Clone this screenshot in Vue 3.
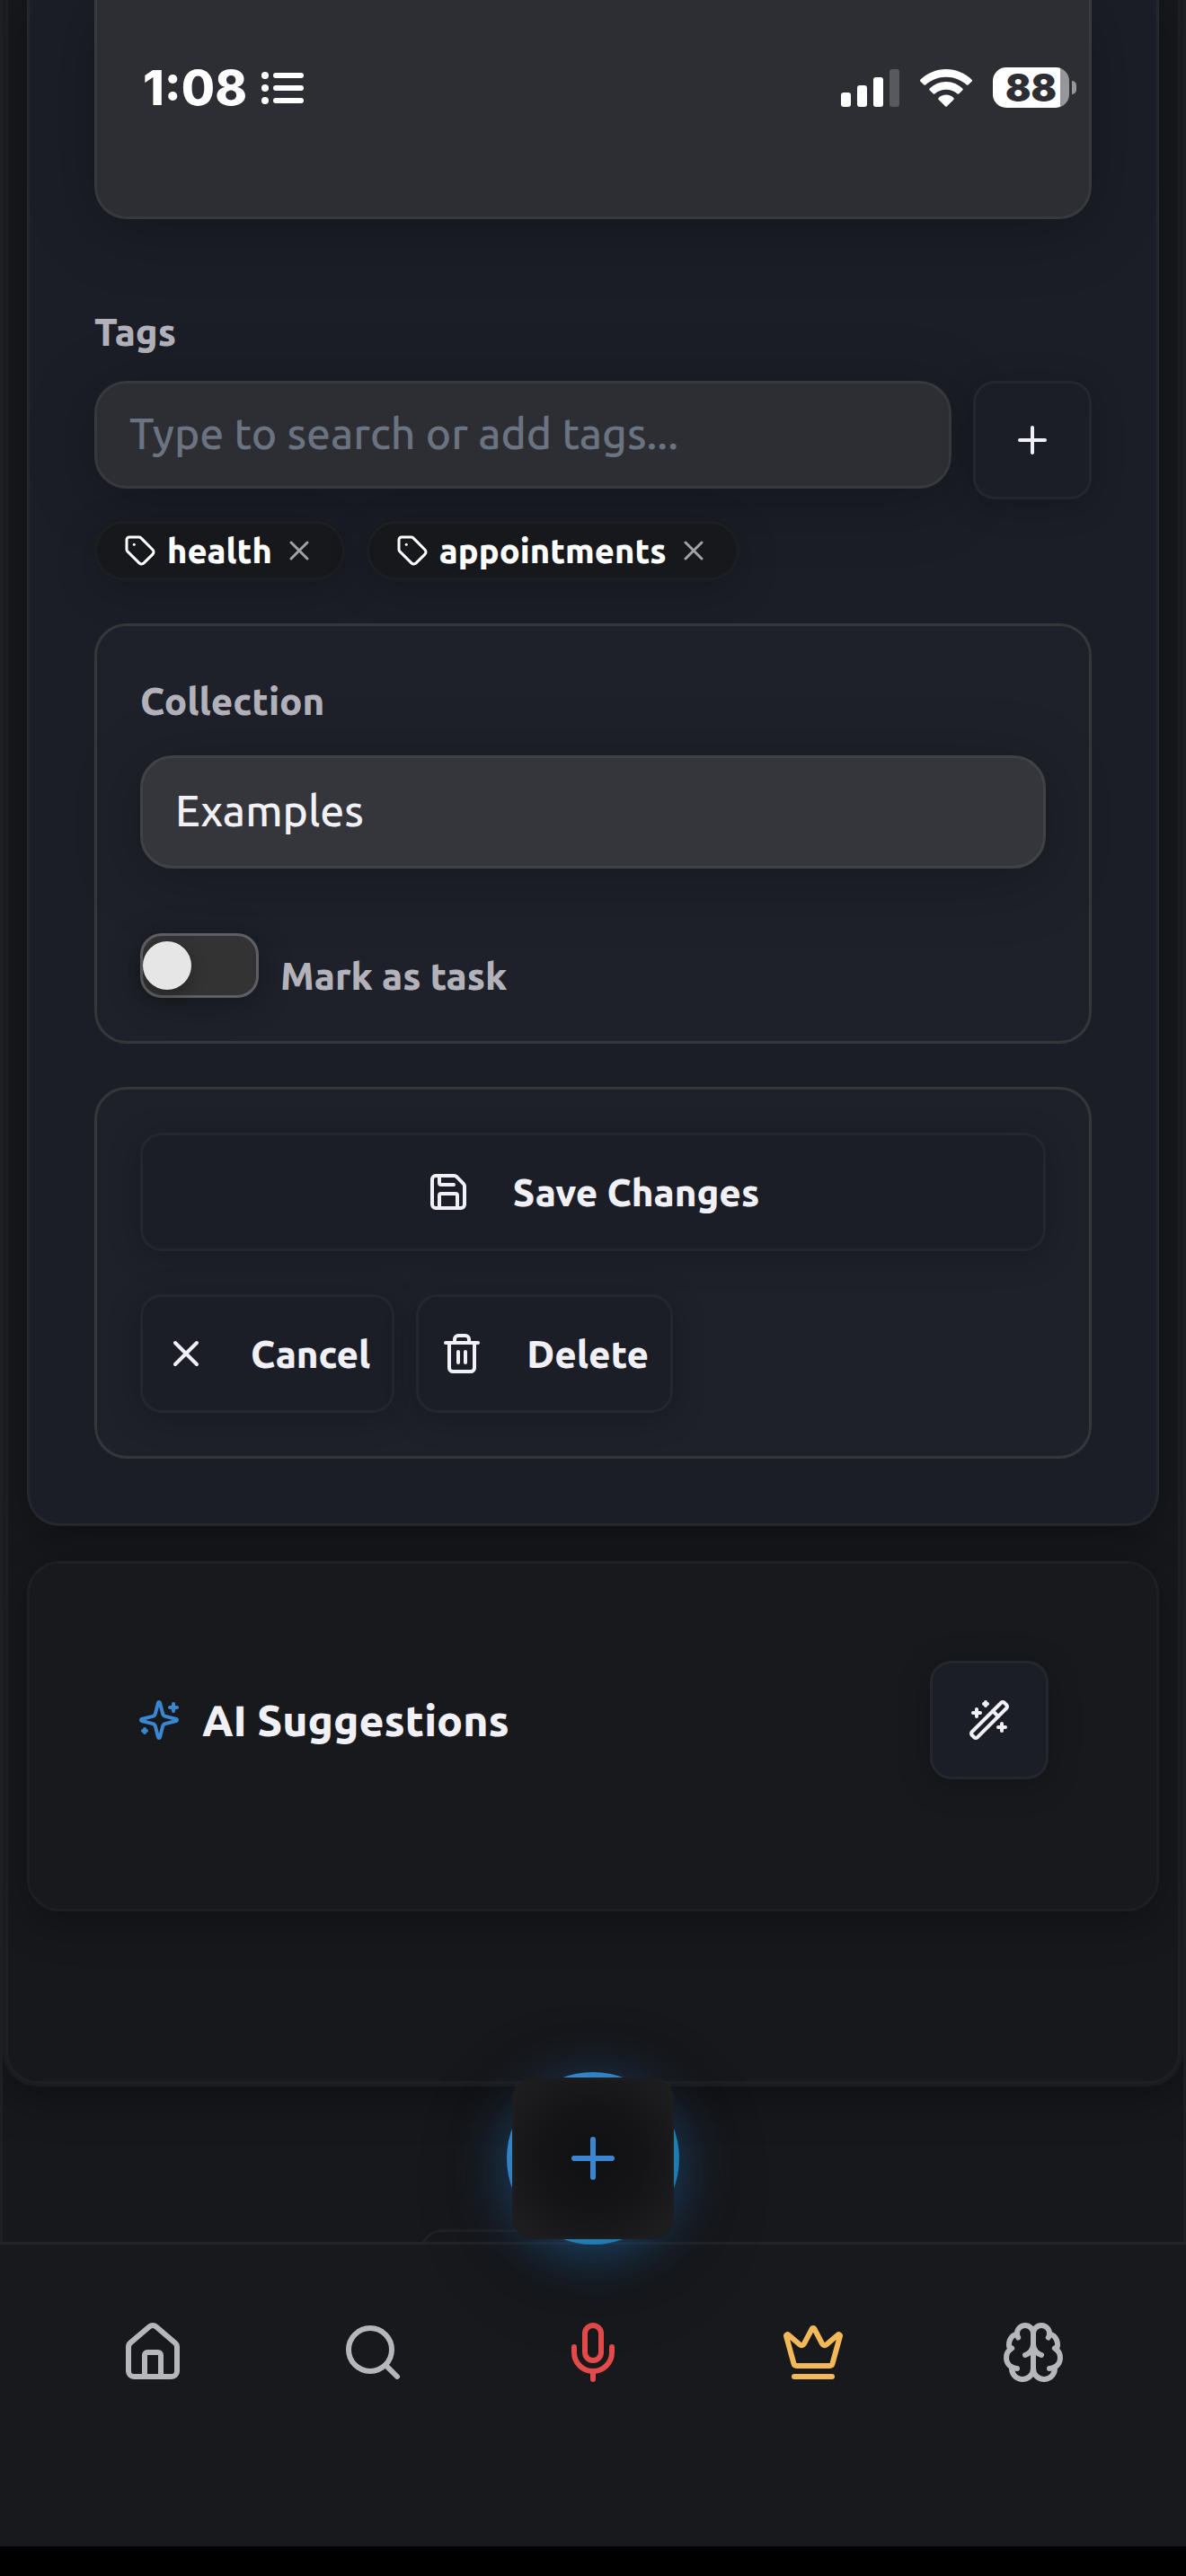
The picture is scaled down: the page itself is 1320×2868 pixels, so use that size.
<script setup>
import { ref } from 'vue'

const query = ref('')
const collection = ref('Examples')
const isTask = ref(false)
const tags = ref(['health', 'appointments'])

const removeTag = (name) => {
  tags.value = tags.value.filter((t) => t !== name)
}

const icons = {
  plus: ['M5 12h14', 'M12 5v14'],
  x: ['M18 6 6 18', 'm6 6 12 12'],
  tag: [
    'M12.586 2.586A2 2 0 0 0 11.172 2H4a2 2 0 0 0-2 2v7.172a2 2 0 0 0 .586 1.414l8.704 8.704a2.426 2.426 0 0 0 3.42 0l6.58-6.58a2.426 2.426 0 0 0 0-3.42z',
    'M7.5 7.5h.01',
  ],
  save: [
    'M15.2 3a2 2 0 0 1 1.4.6l3.8 3.8a2 2 0 0 1 .6 1.4V19a2 2 0 0 1-2 2H5a2 2 0 0 1-2-2V5a2 2 0 0 1 2-2z',
    'M17 21v-7a1 1 0 0 0-1-1H8a1 1 0 0 0-1 1v7',
    'M7 3v4a1 1 0 0 0 1 1h7',
  ],
  trash: [
    'M3 6h18',
    'M19 6v14c0 1-1 2-2 2H7c-1 0-2-1-2-2V6',
    'M8 6V4c0-1 1-2 2-2h4c1 0 2 1 2 2v2',
    'M10 11v6',
    'M14 11v6',
  ],
  sparkles: [
    'M9.937 15.5A2 2 0 0 0 8.5 14.063l-6.135-1.582a.5.5 0 0 1 0-.962L8.5 9.936A2 2 0 0 0 9.937 8.5l1.582-6.135a.5.5 0 0 1 .963 0L14.063 8.5A2 2 0 0 0 15.5 9.937l6.135 1.581a.5.5 0 0 1 0 .964L15.5 14.063a2 2 0 0 0-1.437 1.437l-1.582 6.135a.5.5 0 0 1-.963 0z',
    'M20 3v4',
    'M22 5h-4',
    'M4 17v2',
    'M5 18H3',
  ],
  wand: [
    'm21.64 3.64-1.28-1.28a1.21 1.21 0 0 0-1.72 0L2.36 18.64a1.21 1.21 0 0 0 0 1.72l1.28 1.28a1.2 1.2 0 0 0 1.72 0L21.64 5.36a1.2 1.2 0 0 0 0-1.72',
    'm14 7 3 3',
    'M5 6v4',
    'M19 14v4',
    'M10 2v2',
    'M7 8H3',
    'M21 16h-4',
    'M11 3H9',
  ],
}

const navItems = [
  {
    name: 'Home',
    tone: 'muted',
    paths: [
      'M15 21v-8a1 1 0 0 0-1-1h-4a1 1 0 0 0-1 1v8',
      'M3 10a2 2 0 0 1 .709-1.528l7-5.999a2 2 0 0 1 2.582 0l7 5.999A2 2 0 0 1 21 10v9a2 2 0 0 1-2 2H5a2 2 0 0 1-2-2z',
    ],
  },
  { name: 'Search', tone: 'muted', paths: ['M19 11a8 8 0 1 1-16 0 8 8 0 0 1 16 0z', 'm21 21-4.3-4.3'] },
  {
    name: 'Record',
    tone: 'red',
    paths: [
      'M12 2a3 3 0 0 0-3 3v7a3 3 0 0 0 6 0V5a3 3 0 0 0-3-3Z',
      'M19 10v2a7 7 0 0 1-14 0v-2',
      'M12 19v3',
    ],
  },
  {
    name: 'Premium',
    tone: 'gold',
    paths: [
      'M11.562 3.266a.5.5 0 0 1 .876 0L15.39 8.87a1 1 0 0 0 1.516.294L21.183 5.5a.5.5 0 0 1 .798.519l-2.834 10.246a1 1 0 0 1-.956.734H5.81a1 1 0 0 1-.957-.734L2.02 6.02a.5.5 0 0 1 .798-.519l4.276 3.664a1 1 0 0 0 1.516-.294z',
      'M5 21h14',
    ],
  },
  {
    name: 'Brain',
    tone: 'muted',
    paths: [
      'M12 5a3 3 0 1 0-5.997.125 4 4 0 0 0-2.526 5.77 4 4 0 0 0 .556 6.588A4 4 0 1 0 12 18Z',
      'M12 5a3 3 0 1 1 5.997.125 4 4 0 0 1 2.526 5.77 4 4 0 0 1-.556 6.588A4 4 0 1 1 12 18Z',
      'M15 13a4.5 4.5 0 0 1-3-4 4.5 4.5 0 0 1-3 4',
      'M17.599 6.5a3 3 0 0 0 .399-1.375',
      'M6.003 5.125A3 3 0 0 0 6.401 6.5',
      'M3.477 10.896a4 4 0 0 1 .585-.396',
      'M19.938 10.5a4 4 0 0 1 .585.396',
      'M6 18a4 4 0 0 1-1.967-.516',
      'M19.967 17.484A4 4 0 0 1 18 18',
    ],
  },
]
</script>

<template>
  <div class="page">
    <main class="screen">
      <div class="panel">
        <div class="panel-inner">
          <form class="card editor" @submit.prevent>
            <div class="media">
              <div class="status-left">
                <span class="clock">1:08</span>
                <svg class="list" viewBox="0 0 48 36" aria-hidden="true">
                  <g fill="#fff">
                    <circle cx="4" cy="4" r="4" /><circle cx="4" cy="18" r="4" /><circle cx="4" cy="32" r="4" />
                    <rect x="13" y="1" width="34" height="6" rx="3" />
                    <rect x="13" y="15" width="34" height="6" rx="3" />
                    <rect x="13" y="29" width="34" height="6" rx="3" />
                  </g>
                </svg>
              </div>
              <div class="status-right">
                <svg class="signal" viewBox="0 0 65 42" aria-hidden="true">
                  <rect x="0" y="26" width="11" height="16" rx="3" fill="#fff" />
                  <rect x="18" y="18" width="11" height="24" rx="3" fill="#fff" />
                  <rect x="36" y="9" width="11" height="33" rx="3" fill="#fff" />
                  <rect x="54" y="0" width="11" height="42" rx="3" fill="#59595d" />
                </svg>
                <svg class="wifi" viewBox="0 0 58 42" aria-hidden="true">
                  <g fill="#fff">
                    <path d="M29 0C40 0 50 4.500 57.500 11.500Q58.500 12.800 57.500 13.800L53.500 17.400Q52.500 18.200 51.500 17.300C45.500 12 37.500 8.800 29 8.800S12.500 12 6.500 17.300Q5.500 18.200 4.500 17.400L.5 13.800Q-.5 12.800 .5 11.500C8 4.500 18 0 29 0Z" />
                    <path d="M29 14C36.300 14 42.600 17 47.300 21.500Q48.300 22.500 47.300 23.600L43.400 27.300Q42.400 28.200 41.300 27.300C38 24.300 33.700 22.800 29 22.800S20 24.300 16.700 27.300Q15.600 28.200 14.600 27.300L10.700 23.600Q9.700 22.500 10.700 21.500C15.400 17 21.700 14 29 14Z" />
                    <path d="M29 28.500C32.500 28.500 35.400 30 37.300 32Q38.200 33 37.300 34L30 41.300Q29 42.300 28 41.300L20.700 34Q19.800 33 20.700 32C22.600 30 25.500 28.500 29 28.500Z" />
                  </g>
                </svg>
                <div class="battery">
                  <span class="battery-body">88</span>
                  <span class="battery-tip"></span>
                </div>
              </div>
            </div>

            <label class="label tags-label" for="tag-search">Tags</label>
            <div class="tag-row">
              <input id="tag-search" v-model="query" class="input" type="text" placeholder="Type to search or add tags..." />
              <button class="btn square" type="button" aria-label="Add tag">
                <svg class="ico" viewBox="0 0 24 24"><path v-for="d in icons.plus" :key="d" :d="d" /></svg>
              </button>
            </div>
            <ul class="tags">
              <li v-for="t in tags" :key="t" class="tag">
                <svg class="ico small" viewBox="0 0 24 24"><path v-for="d in icons.tag" :key="d" :d="d" /></svg>
                <span>{{ t }}</span>
                <button class="tag-x" type="button" :aria-label="'Remove ' + t" @click="removeTag(t)">
                  <svg class="ico small" viewBox="0 0 24 24"><path v-for="d in icons.x" :key="d" :d="d" /></svg>
                </button>
              </li>
            </ul>

            <section class="group">
              <label class="label" for="collection">Collection</label>
              <select id="collection" v-model="collection" class="input select">
                <option>Examples</option>
              </select>
              <div class="task">
                <input id="task" v-model="isTask" class="toggle" type="checkbox" />
                <label class="label task-label" for="task">Mark as task</label>
              </div>
            </section>

            <section class="group actions">
              <button class="btn" type="submit">
                <svg class="ico" viewBox="0 0 24 24"><path v-for="d in icons.save" :key="d" :d="d" /></svg>
                Save Changes
              </button>
              <div class="pair">
                <button class="btn" type="button">
                  <svg class="ico" viewBox="0 0 24 24"><path v-for="d in icons.x" :key="d" :d="d" /></svg>
                  Cancel
                </button>
                <button class="btn" type="button">
                  <svg class="ico" viewBox="0 0 24 24"><path v-for="d in icons.trash" :key="d" :d="d" /></svg>
                  Delete
                </button>
              </div>
            </section>
          </form>

          <section class="card ai">
            <h2 class="ai-title">
              <svg class="ico" viewBox="0 0 24 24"><path v-for="d in icons.sparkles" :key="d" :d="d" /></svg>
              AI Suggestions
            </h2>
            <button class="btn square" type="button" aria-label="Generate suggestions">
              <svg class="ico" viewBox="0 0 24 24"><path v-for="d in icons.wand" :key="d" :d="d" /></svg>
            </button>
          </section>
        </div>
      </div>
      <div class="peek"></div>
    </main>

    <nav class="nav">
      <div class="fab-ring">
        <button class="fab" type="button" aria-label="New note">
          <svg class="ico large" viewBox="0 0 24 24"><path v-for="d in icons.plus" :key="d" :d="d" /></svg>
        </button>
      </div>
      <a v-for="item in navItems" :key="item.name" href="#" class="nav-item" :class="item.tone" :aria-label="item.name">
        <svg class="ico large" viewBox="0 0 24 24"><path v-for="d in item.paths" :key="d" :d="d" /></svg>
      </a>
    </nav>
  </div>
</template>

<style>
body {
  margin: 0;
  background: #000;
}
</style>

<style scoped>
.page {
  display: flex;
  flex-direction: column;
  box-sizing: border-box;
  min-height: 100vh;
  padding-bottom: 33px;
  background: #000;
  color: #f1f0f6;
  font-family: Ubuntu, "Noto Sans", "Open Sans", sans-serif;
  font-size: 42px;
}
.page * {
  box-sizing: border-box;
}
.screen {
  position: relative;
  flex: 1;
  padding-bottom: 173px;
  overflow: hidden;
  background: #17181c;
  border: solid #1e1f23;
  border-width: 0 3px;
}
.panel {
  border: 3px solid #1b1c20;
  border-top: 0;
  border-radius: 0 0 39px 39px;
  box-shadow: 0 12px 48px rgba(0, 0, 0, 0.35);
}
.panel-inner {
  display: flex;
  flex-direction: column;
  gap: 39px;
  padding: 0 21px 189px;
  border: 3px solid #1e1f22;
  border-top: 0;
  border-radius: 0 0 36px 36px;
}
.card {
  border: 3px solid #24272d;
  border-radius: 36px;
  box-shadow: 0 12px 48px rgba(0, 0, 0, 0.3);
}
.editor {
  display: flex;
  flex-direction: column;
  padding: 0 72px 72px;
  border-top: 0;
  border-radius: 0 0 36px 36px;
  background: #1b1e26;
}
.media {
  display: flex;
  align-items: center;
  justify-content: space-between;
  height: 244px;
  padding: 0 14px 46px 51px;
  background: #2d2e33;
  border: 3px solid #38393d;
  border-top: 0;
  border-radius: 0 0 36px 36px;
  box-shadow: 0 12px 72px rgba(0, 0, 0, 0.25);
}
.status-left,
.status-right {
  display: flex;
  align-items: center;
}
.status-left {
  gap: 16px;
}
.status-right {
  gap: 23px;
}
.clock {
  color: #fff;
  font-family: Inter, sans-serif;
  font-size: 54px;
  font-weight: 800;
  line-height: 60px;
}
.list {
  width: 48px;
  height: 36px;
}
.signal {
  width: 65px;
  height: 42px;
}
.wifi {
  width: 58px;
  height: 42px;
}
.battery {
  display: flex;
  align-items: center;
  gap: 3px;
}
.battery-body {
  width: 85px;
  height: 45px;
  border-radius: 15px;
  background: linear-gradient(90deg, #fff 88%, #96979a 88%);
  color: #2d2e33;
  font-family: Inter, sans-serif;
  font-size: 42px;
  font-weight: 900;
  line-height: 45px;
  text-align: center;
}
.battery-tip {
  width: 5px;
  height: 15px;
  border-radius: 0 8px 8px 0;
  background: #96979a;
}
.label {
  align-self: flex-start;
  color: #b3b2bb;
  font-size: 42px;
  font-weight: 800;
  line-height: 72px;
}
.tags-label {
  margin: 90px 0 18px;
}
.tag-row {
  display: flex;
  align-items: flex-start;
  gap: 24px;
}
.input {
  flex: 1;
  min-width: 0;
  height: 120px;
  margin: 0;
  padding: 0 36px 4px;
  background: #2d2e33;
  border: 3px solid #38393d;
  border-radius: 36px;
  outline: 0;
  color: #f1f0f6;
  font-family: inherit;
  font-size: 48px;
  font-weight: 500;
  box-shadow: 0 12px 72px rgba(0, 0, 0, 0.25);
}
.input::placeholder {
  color: #6b7280;
  opacity: 1;
}
.btn {
  display: flex;
  align-items: center;
  justify-content: center;
  gap: 48px;
  height: 132px;
  margin: 0;
  padding: 0 24px;
  background: #1b1e26;
  border: 3px solid #24272d;
  border-radius: 24px;
  box-shadow: 0 6px 36px rgba(0, 0, 0, 0.22);
  color: #f1f0f6;
  font-family: inherit;
  font-size: 42px;
  font-weight: 800;
}
.btn.square {
  flex: none;
  width: 132px;
  padding: 0;
}
.ico {
  flex: none;
  width: 48px;
  height: 48px;
  fill: none;
  stroke: currentColor;
  stroke-width: 2;
  stroke-linecap: round;
  stroke-linejoin: round;
}
.ico.small {
  width: 36px;
  height: 36px;
}
.ico.large {
  width: 72px;
  height: 72px;
}
.tags {
  display: flex;
  flex-wrap: wrap;
  gap: 24px;
  margin: 24px 0 48px;
  padding: 0;
  list-style: none;
}
.tag {
  display: flex;
  align-items: center;
  gap: 12px;
  height: 66px;
  padding: 0 30px;
  background: #17181c;
  border: 3px solid #1d1e22;
  border-radius: 33px;
  box-shadow: 0 12px 48px rgba(0, 0, 0, 0.2);
  color: #fff;
  font-size: 38px;
  font-weight: 800;
  line-height: 60px;
}
.tag-x {
  display: flex;
  padding: 0;
  background: none;
  border: 0;
  color: #a2a2a5;
}
.group {
  display: flex;
  flex-direction: column;
  padding: 48px;
  background: #1e2129;
  border: 3px solid #35373a;
  border-radius: 36px;
}
.select {
  flex: none;
  height: 126px;
  margin-top: 24px;
  appearance: none;
  background: #35363b;
  border-color: #414246;
}
.task {
  display: flex;
  align-items: flex-end;
  gap: 24px;
  margin-top: 72px;
}
.toggle {
  display: flex;
  align-items: center;
  width: 132px;
  height: 72px;
  margin: 0;
  appearance: none;
  background: #333;
  border: 3px solid #5e5f65;
  border-radius: 24px;
  box-shadow: 0 6px 36px rgba(0, 0, 0, 0.3);
}
.toggle::before {
  content: "";
  width: 54px;
  height: 54px;
  border-radius: 50%;
  background: #e6e6e6;
  box-shadow: 0 6px 18px rgba(0, 0, 0, 0.3);
}
.toggle:checked {
  justify-content: flex-end;
  background: #3b86d1;
}
.task-label {
  align-self: auto;
  line-height: 48px;
}
.actions {
  gap: 48px;
  margin-top: 48px;
}
.pair {
  display: flex;
  gap: 24px;
}
.ai {
  display: flex;
  align-items: center;
  justify-content: space-between;
  padding: 108px 120px 144px;
  background: #17191d;
  border-color: #1e1f23;
}
.ai-title {
  display: flex;
  align-items: center;
  gap: 24px;
  margin: 0;
  font-size: 48px;
  font-weight: 800;
  line-height: 60px;
}
.ai-title .ico {
  color: #3b86d1;
}
.peek {
  position: absolute;
  bottom: -60px;
  left: 35.4%;
  width: 180px;
  height: 74px;
  border: 3px solid #1f2125;
  border-radius: 24px;
}
.nav {
  position: relative;
  display: flex;
  justify-content: space-around;
  padding: 84px 48px 180px;
  background: #17191d;
  border-top: 3px solid #222327;
}
.nav-item {
  display: flex;
  flex: 1;
  justify-content: center;
}
.muted {
  color: #b6b6bd;
}
.red {
  color: #e44a4a;
}
.gold {
  color: #f3b858;
}
.fab-ring {
  position: absolute;
  top: -192px;
  left: calc(50% - 96px);
  width: 192px;
  height: 192px;
  padding: 6px;
  border-radius: 50%;
  background: linear-gradient(135deg, #3b86d1, #1479a8);
  box-shadow: 0 12px 60px rgba(40, 120, 195, 0.5), 0 24px 96px rgba(0, 0, 0, 0.35);
}
.fab {
  display: flex;
  align-items: center;
  justify-content: center;
  width: 180px;
  height: 180px;
  padding: 0;
  background: radial-gradient(circle, #101113 0%, #141416 45%, #1f1f21 100%);
  border: 3px solid #1d1d1f;
  border-radius: 24px;
  color: #3b86d1;
}
</style>
